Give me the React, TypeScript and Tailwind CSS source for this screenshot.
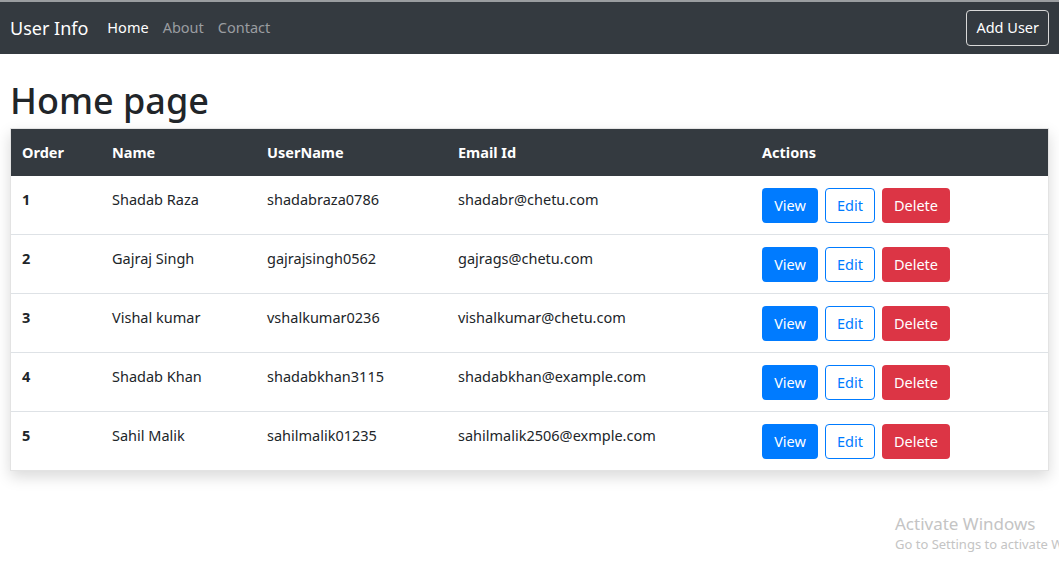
import React from "react";

type User = {
  order: number;
  name: string;
  username: string;
  email: string;
};

const users: User[] = [
  { order: 1, name: "Shadab Raza", username: "shadabraza0786", email: "shadabr@chetu.com" },
  { order: 2, name: "Gajraj Singh", username: "gajrajsingh0562", email: "gajrags@chetu.com" },
  { order: 3, name: "Vishal kumar", username: "vshalkumar0236", email: "vishalkumar@chetu.com" },
  { order: 4, name: "Shadab Khan", username: "shadabkhan3115", email: "shadabkhan@example.com" },
  { order: 5, name: "Sahil Malik", username: "sahilmalik01235", email: "sahilmalik2506@exmple.com" },
];

const App: React.FC = () => {
  return (
    <div className="relative min-h-[582px] overflow-hidden bg-white font-['Noto_Sans',sans-serif] text-[#212529]">
      <nav className="flex h-[54px] items-center border-t-2 border-[#9a9da0] bg-[#343a40] pl-[10px] pr-[10px]">
        <span className="mr-[19px] text-[18px] text-white">User Info</span>
        <div className="flex flex-row gap-[14px] text-[14.5px]">
          <span className="text-white">Home</span>
          <span className="text-[#9a9da0]">About</span>
          <span className="text-[#9a9da0]">Contact</span>
        </div>
        <button className="ml-auto h-[36px] rounded-[4px] border border-[#d8d8d8] px-[9px] text-[14.5px] text-white">
          Add User
        </button>
      </nav>

      <div className="px-[10px]">
        <h1 className="pt-[23px] pb-[3px] text-[36px] leading-[48px] font-medium">Home page</h1>
        <div className="shadow-[0_6px_14px_rgba(0,0,0,0.15)] border border-[#e3e3e3]">
          <table className="w-full border-collapse text-left text-[14.5px]">
            <thead>
              <tr className="bg-[#343a40] leading-[23px] text-white">
                <th className="w-[90px] py-[12px] pl-[11px] font-bold">Order</th>
                <th className="w-[155px] py-[12px] pl-[11px] font-bold">Name</th>
                <th className="w-[191px] py-[12px] pl-[11px] font-bold">UserName</th>
                <th className="w-[304px] py-[12px] pl-[11px] font-bold">Email Id</th>
                <th className="py-[12px] pl-[11px] font-bold">Actions</th>
              </tr>
            </thead>
            <tbody>
              {users.map((u, i) => (
                <tr key={u.order} className={i > 0 ? "border-t border-[#dee2e6]" : ""}>
                  <td className="h-[58px] pt-[13px] pl-[11px] align-top font-bold">{u.order}</td>
                  <td className="pt-[13px] pl-[11px] align-top">{u.name}</td>
                  <td className="pt-[13px] pl-[11px] align-top">{u.username}</td>
                  <td className="pt-[13px] pl-[11px] align-top">{u.email}</td>
                  <td className="pt-[12px] pb-[11px] pl-[11px] align-top">
                    <div className="flex flex-row gap-[7px]">
                      <button className="h-[35px] w-[56px] rounded-[4px] bg-[#007bff] text-[14.5px] text-white">
                        View
                      </button>
                      <button className="h-[35px] w-[50px] rounded-[4px] border border-[#007bff] text-[14.5px] text-[#007bff]">
                        Edit
                      </button>
                      <button className="h-[35px] w-[68px] rounded-[4px] bg-[#dc3545] text-[14.5px] text-white">
                        Delete
                      </button>
                    </div>
                  </td>
                </tr>
              ))}
            </tbody>
          </table>
        </div>
      </div>

      <div className="absolute left-[895px] top-[513px] whitespace-nowrap text-[#c4c4c4]">
        <div className="text-[17px] leading-[22px]">Activate Windows</div>
        <div className="text-[13px] leading-[18px]">Go to Settings to activate Windows.</div>
      </div>
    </div>
  );
};

export default App;
